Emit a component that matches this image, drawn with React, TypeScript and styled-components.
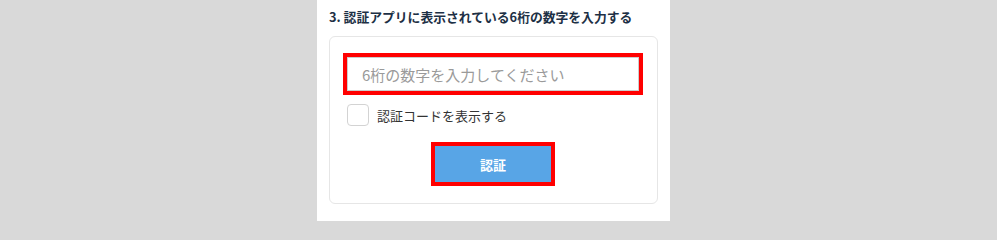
import React, { useState } from "react"
import styled, { createGlobalStyle } from "styled-components"

const GlobalStyle = createGlobalStyle`
  html, body {
    margin: 0;
    padding: 0;
    height: 222px;
    overflow: hidden;
    background: #d9d9d9;
    font-family: "Noto Sans CJK JP", "Noto Sans", "Liberation Sans", sans-serif;
  }
`

const Page = styled.div`
  display: flex;
  padding-left: 317px;
  height: 222px;
  box-sizing: border-box;
`

const Panel = styled.section`
  width: 353px;
  height: 221px;
  background: #ffffff;
  padding: 7px 12px 0;
  box-sizing: border-box;
`

const Heading = styled.h3`
  margin: 0 0 9px;
  font-size: 12.8px;
  line-height: 20px;
  font-weight: 700;
  color: #1d3045;
`

const Card = styled.div`
  border: 1px solid #e6e6e6;
  border-radius: 6px;
  padding: 20px 18px 21px 17px;
  display: flex;
  flex-direction: column;
`

const CodeInput = styled.input`
  height: 34px;
  box-sizing: border-box;
  border: 1px solid #cccccc;
  padding: 0 14px;
  font-family: inherit;
  font-size: 15px;
  color: #333;
  outline: 4px solid #ff0000;
  &::placeholder {
    color: #9a9a9a;
  }
`

const CheckRow = styled.label`
  display: flex;
  align-items: center;
  gap: 8px;
  margin-top: 13px;
  height: 22px;
  font-size: 13px;
  color: #333333;
  cursor: pointer;
`

const Box = styled.span<{ $checked: boolean }>`
  width: 22px;
  height: 22px;
  box-sizing: border-box;
  border: 1px solid #d3d3d3;
  border-radius: 4px;
  background: ${(p) => (p.$checked ? "#58a5e6" : "#fff")};
`

const HiddenCheck = styled.input`
  display: none;
`

const SubmitButton = styled.button`
  align-self: center;
  margin-top: 20px;
  width: 116px;
  height: 36px;
  border: none;
  background: #58a5e6;
  color: #ffffff;
  font-family: inherit;
  font-size: 13px;
  font-weight: 700;
  outline: 4px solid #ff0000;
  cursor: pointer;
`

export default function App() {
  const [show, setShow] = useState(false)
  const [code, setCode] = useState("")

  return (
    <>
      <GlobalStyle />
      <Page>
        <Panel>
          <Heading>3. 認証アプリに表示されている6桁の数字を入力する</Heading>
          <Card>
            <CodeInput
              type={show ? "text" : "password"}
              value={code}
              onChange={(e) => setCode(e.target.value)}
              placeholder="6桁の数字を入力してください"
            />
            <CheckRow>
              <HiddenCheck
                type="checkbox"
                checked={show}
                onChange={() => setShow(!show)}
              />
              <Box $checked={show} />
              認証コードを表示する
            </CheckRow>
            <SubmitButton>認証</SubmitButton>
          </Card>
        </Panel>
      </Page>
    </>
  )
}
